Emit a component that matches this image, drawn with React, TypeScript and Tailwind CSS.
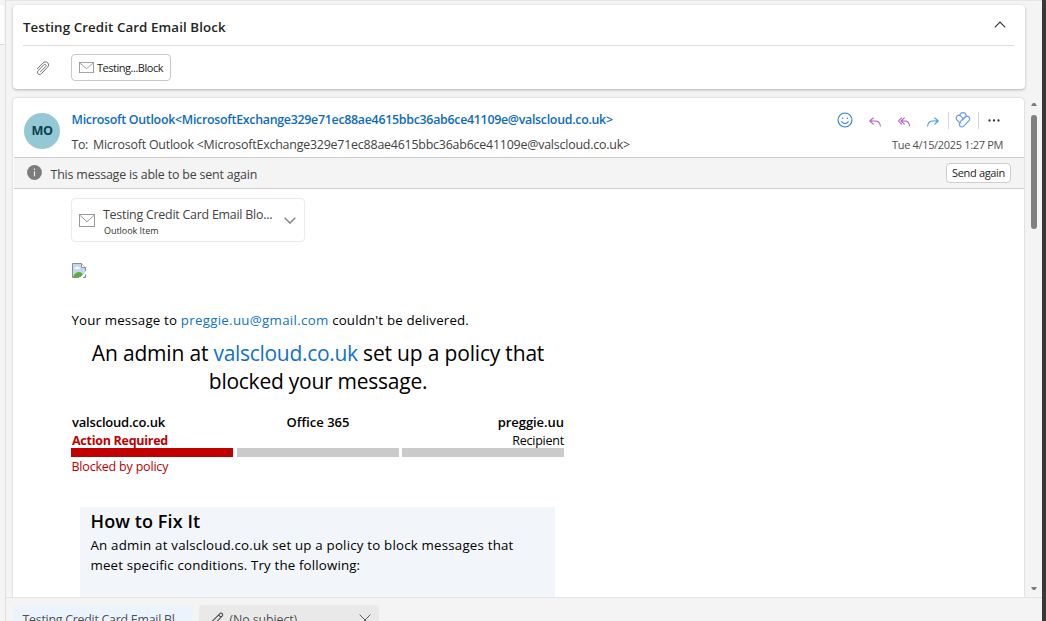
import type { ReactNode } from 'react';

function Envelope({ className }: { className: string }) {
  return (
    <svg className={className} viewBox="0 0 16 13" fill="none" stroke="#999" strokeWidth="1" preserveAspectRatio="none">
      <rect x="0.5" y="0.5" width="15" height="12" />
      <path d="M0.8 1.2 8 7.8 15.2 1.2" />
    </svg>
  );
}

function Paperclip() {
  return (
    <svg className="h-[15px] w-[14px]" viewBox="0 0 14 15" fill="none" stroke="#6e6e6e" strokeWidth="1" strokeLinecap="round">
      <path d="M1.300 7.800 6.700 2.200C8.300.6 10.500.6 11.700 1.800c1.200 1.200 1.100 3.100-.3 4.500L5.600 12.600c-1.100 1.100-2.600 1.100-3.500.2-.9-.9-.8-2.300.2-3.300L7.700 3.900c.6-.6 1.500-.7 2-.1.500.5.400 1.300-.2 1.900L4.600 10.700" />
    </svg>
  );
}

function BrokenImage() {
  return (
    <svg className="h-[15px] w-[14px]" viewBox="0 0 14 15">
      <path d="M.5.500h9l4 4v10H.5z" fill="#c5d5f5" />
      <path d="M2.500 5.500c0-1 1-1.300 1.600-1.100.4-1.200 2.300-1.200 2.700 0 .9 0 1.400 1.100.4 1.600H3c-.3 0-.5-.2-.5-.5z" fill="#fff" />
      <path d="M1 14c1-3 3.500-5 6-5 2.500 0 4 2 6 5z" fill="#5aaf3c" />
      <path d="M14 8.500 7.500 15H11l3-3z" fill="#fff" />
      <path d="M7 14.500H.5V.5h9l4 4V8M13.500 11.500v3H11" fill="none" stroke="#8f8f8f" />
      <path d="M9.500.5v4h4" fill="#fff" stroke="#8f8f8f" />
    </svg>
  );
}

function Pencil() {
  return (
    <svg className="h-[14px] w-[14px]" viewBox="0 0 14 14" fill="none" stroke="#505050" strokeWidth="1.1" strokeLinejoin="round">
      <path d="M1.200 12.800 2 9.500 9.700 1.800c.8-.8 1.800-.8 2.500-.1s.7 1.700-.1 2.500L4.500 12zM8.600 3l2.400 2.400" />
    </svg>
  );
}

function Actions() {
  return (
    <div className="flex h-4 items-center">
      <svg className="h-4 w-4" viewBox="0 0 16 16" fill="none" stroke="#2f80c8" strokeWidth="1.1" strokeLinecap="round">
        <circle cx="8" cy="8" r="7" />
        <path d="M4.700 9.800c1.500 2.300 5.100 2.300 6.600 0" />
        <circle cx="5.600" cy="6.200" r=".8" fill="#2f80c8" stroke="none" />
        <circle cx="10.400" cy="6.200" r=".8" fill="#2f80c8" stroke="none" />
      </svg>
      <svg className="mt-[3px] ml-4 h-[10px] w-3" viewBox="0 0 12 10" fill="none" stroke="#b45cc0" strokeWidth="1.05" strokeLinecap="round" strokeLinejoin="round">
        <path d="M4.300.8.8 4l3.500 3.200M.8 4H6c3.300 0 5 2 5.400 5" />
      </svg>
      <svg className="mt-[3px] ml-[17px] h-[10px] w-3" viewBox="0 0 12 10" fill="none" stroke="#b45cc0" strokeWidth="1.05" strokeLinecap="round" strokeLinejoin="round">
        <path d="M3.500.8.500 4l3 3.200M6.300.8 3 4l3.300 3.200M3 4h4c2.800 0 4.200 2 4.500 5" />
      </svg>
      <svg className="mt-[3px] ml-[17px] h-[10px] w-3" viewBox="0 0 12 10" fill="none" stroke="#3f9be0" strokeWidth="1.05" strokeLinecap="round" strokeLinejoin="round">
        <path d="M7.700.8 11.200 4 7.700 7.200M11.200 4H6C2.700 4 1 6 .6 9" />
      </svg>
      <span className="ml-[9px] h-[17px] w-px bg-[#d4d4d4]" />
      <svg className="ml-[6px] h-4 w-4" viewBox="0 0 16 16" fill="none" stroke="#6f9bf5" strokeWidth="1.200" strokeLinejoin="round">
        <path d="M5.300 9.700 10 5c1.100-1.100 2.800-1.100 3.900 0s1.100 2.800 0 3.900l-5.200 5.200c-1 1-2.600 1-3.600 0s-.9-2.400.2-3.500z" />
        <path d="M4.800 10.600 2.100 8.200C.9 7.100.9 5.300 2 4.200s2.700-1.100 3.800 0l2.400 2.600" />
        <path d="M4.900 3.600C4.900 1.900 6.200.7 8 .7s3.100 1.200 3.100 2.900c0 .4-.1.700-.2 1L7 8.300" />
      </svg>
      <span className="ml-[7px] h-[17px] w-px bg-[#d4d4d4]" />
      <svg className="mt-px mr-px ml-[9px] h-1 w-3" viewBox="0 0 12 4" fill="#333">
        <circle cx="1.500" cy="1.500" r="1.150" />
        <circle cx="6" cy="1.500" r="1.150" />
        <circle cx="10.500" cy="1.500" r="1.150" />
      </svg>
    </div>
  );
}

function Link({ children }: { children: ReactNode }) {
  return <span className="tracking-[0.3px] text-[#0f72c7]">{children}</span>;
}

function SubjectCard() {
  return (
    <section className="h-[84px] w-[1012px] rounded-[4px] bg-white pr-[11px] pl-[9px] shadow-[0_1px_3px_rgba(0,0,0,0.28)]">
      <div className="ml-px flex h-[41px] items-center justify-between border-b border-[#dcdcdc]">
        <h1 className="mt-[3px] text-[13.3px] leading-5 font-semibold tracking-[0.1px] text-[#242424]">Testing Credit Card Email Block</h1>
        <svg className="mr-2 mb-[2px] h-[7px] w-3" viewBox="0 0 12 7" fill="none" stroke="#333" strokeWidth="1.100">
          <path d="M.8 6.300 6 1l5.200 5.300" />
        </svg>
      </div>
      <div className="flex h-[43px] items-center">
        <div className="mt-px ml-[14px]"><Paperclip /></div>
        <div className="ml-[21px] flex h-[27px] w-[100px] items-center rounded-[4px] border border-[#c8c8c8] pl-[7px]">
          <Envelope className="h-[11px] w-[15px]" />
          <span className="ml-[3px] text-[11px] leading-4 tracking-[-0.47px] text-[#242424]">Testing...Block</span>
        </div>
      </div>
    </section>
  );
}

function MessageHeader() {
  return (
    <header className="flex h-[59px] pl-[11px]">
      <div className="mt-[15px] flex h-9 w-9 items-center justify-center rounded-full bg-[#94c8d4] pt-px text-[12.600px] font-bold tracking-[-0.5px] text-[#0a4250]">MO</div>
      <div className="ml-[11.5px] flex flex-col pt-[12px]">
        <div className="h-5 text-[12.4px] leading-5 font-semibold tracking-[-0.285px] text-[#0f6cbd]">
          Microsoft Outlook&lt;MicrosoftExchange329e71ec88ae4615bbc36ab6ce41109e@valscloud.co.uk&gt;
        </div>
        <div className="mt-[5px] flex h-5 text-[12.4px] leading-5 text-[#424242]">
          <span className="w-[21.5px] tracking-[-0.4px]">To:</span>
          <span className="tracking-[-0.2px]">Microsoft Outlook &lt;MicrosoftExchange329e71ec88ae4615bbc36ab6ce41109e@valscloud.co.uk&gt;</span>
        </div>
      </div>
      <div className="ml-auto flex flex-col items-end pt-[14px] pr-[21px]">
        <div className="mr-[2px]"><Actions /></div>
        <div className="mt-[9px] text-[11px] leading-4 tracking-[-0.33px] text-[#505050]">Tue 4/15/2025 1:27 PM</div>
      </div>
    </header>
  );
}

function ResendBar() {
  return (
    <div className="ml-px flex h-8 items-center border-y border-[#cdcdcd] bg-[#f4f4f4] pr-[13px] pl-[13px]">
      <svg className="mb-px h-[15px] w-[15px]" viewBox="0 0 15 15">
        <circle cx="7.500" cy="7.500" r="7.400" fill="#7c7c7c" />
        <path d="M7.500 6.200v5M7.500 3.600v1.300" stroke="#e8e8e8" strokeWidth="1.200" />
      </svg>
      <span className="mt-[3px] ml-[8.5px] text-[12.4px] leading-5 tracking-[-0.17px] text-[#424242]">This message is able to be sent again</span>
      <button className="ml-auto flex h-5 w-[65px] items-center justify-center rounded-[4px] border border-[#cdcdcd] bg-white text-[11px] tracking-[-0.33px] whitespace-nowrap text-[#242424]">Send again</button>
    </div>
  );
}

function Attachment() {
  return (
    <div className="mt-[9px] flex h-11 w-[234px] items-center rounded-[4px] border border-[#ebebeb] pl-[7px]">
      <Envelope className="h-[13px] w-[16px]" />
      <div className="ml-2 w-[172px] pt-[2px] whitespace-nowrap">
        <div className="h-[18px] text-[12.4px] leading-[18px] tracking-[-0.23px] text-[#424242]">Testing Credit Card Email Blo...</div>
        <div className="ml-px h-[13px] text-[9px] leading-[13px] tracking-[-0.04px] text-[#303030]">Outlook Item</div>
      </div>
      <svg className="ml-[9px] h-[7px] w-3" viewBox="0 0 12 7" fill="none" stroke="#858585" strokeWidth="1.500">
        <path d="M.7.8 6 6 11.300.8" />
      </svg>
    </div>
  );
}

function DeliveryReport() {
  return (
    <div className="w-[493px] text-black">
      <p className="mt-[32px] ml-[0.5px] h-5 text-[13.3px] leading-5 tracking-[0.16px] whitespace-nowrap">
        Your message to <Link>preggie.uu@gmail.com</Link> couldn't be delivered.
      </p>
      <p className="mt-[9px] pl-px text-center text-[21px] leading-7 tracking-[-0.18px]">
        An admin at <span className="tracking-[-0.3px] text-[#0f72c7]">valscloud.co.uk</span> set up a policy that<br />
        <span className="tracking-[-0.25px]">blocked your message.</span>
      </p>
      <div className="mt-[18px] grid h-[18px] grid-cols-3 text-[13px] leading-[18px] font-semibold">
        <span className="pl-px tracking-[-0.2px]">valscloud.co.uk</span>
        <span className="pl-px text-center">Office 365</span>
        <span className="text-right tracking-[-0.05px]">preggie.uu</span>
      </div>
      <div className="flex h-[17px] items-start justify-between text-[12.5px] leading-[19px]">
        <span className="pl-px font-bold tracking-[-0.27px] text-[#c00000]">Action Required</span>
        <span className="tracking-[-0.22px]">Recipient</span>
      </div>
      <div className="flex h-[9px]">
        <span className="w-[162px] bg-[#c00000]" />
        <span className="ml-1 w-[162px] bg-[#cacaca]" />
        <span className="ml-[3px] w-[162px] bg-[#cacaca]" />
      </div>
      <div className="mt-px ml-[0.5px] h-[18px] text-[12.5px] leading-[18px] tracking-[-0.2px] text-[#c00000]">Blocked by policy</div>
    </div>
  );
}

function FixPanel() {
  return (
    <div className="mt-[31px] ml-[9px] h-[90px] w-[475px] bg-[#f2f5fa] pt-[2px] pl-[10.5px] whitespace-nowrap text-black">
      <h2 className="h-6 text-[18px] leading-6 font-semibold tracking-[0.1px]">How to Fix It</h2>
      <p className="mt-[2px] text-[13.3px] leading-5 tracking-[0.2px]">
        An admin at valscloud.co.uk set up a policy to block messages that<br />
        <span className="tracking-[0.16px]">meet specific conditions. Try the following:</span>
      </p>
    </div>
  );
}

function DraftTabs() {
  return (
    <nav className="flex h-6 gap-[6px] border-t border-[#e4e4e4] pt-[7px] pl-[7px] text-[12.400px] leading-5 whitespace-nowrap text-[#505050]">
      <div className="h-8 w-[180px] rounded-t-[4px] bg-[#ebf3fc] pt-[5px] pl-[9.5px] tracking-[-0.26px]">Testing Credit Card Email Bl...</div>
      <div className="flex h-8 w-[180px] rounded-t-[4px] bg-[#e9e9e9] pt-[5px] pl-[11px]">
        <div className="mt-[2px]"><Pencil /></div>
        <span className="ml-[5.5px] tracking-[-0.1px]">(No subject)</span>
        <svg className="mt-[4px] mr-[8px] ml-auto h-3 w-3" viewBox="0 0 12 12" fill="none" stroke="#5c5c5c" strokeWidth="1">
          <path d="M.6.600 11.400 11.400M11.400.600.6 11.400" />
        </svg>
      </div>
    </nav>
  );
}

export default function App() {
  return (
    <div className="flex h-[621px] w-[1046px] overflow-hidden bg-[#f4f4f4] font-['Open_Sans','Liberation_Sans',sans-serif]">
      <aside className="w-[6px] shrink-0 border-r border-[#e0e0e0] pt-[5px]">
        <div className="h-[40px] w-[4px] rounded-tr-[3px] border-b border-[#d8d8d8] bg-white" />
      </aside>
      <main className="flex w-[1036px] shrink-0 flex-col">
        <div className="h-px shrink-0 bg-[#e6e6e6]" />
        <div className="flex h-[596px] shrink-0 flex-col overflow-hidden pt-1 pl-[7px]">
          <SubjectCard />
          <div className="mt-[9px] flex">
            <article className="h-[499px] w-[1011px] shrink-0 rounded-t-[4px] bg-white shadow-[0_0_2px_rgba(0,0,0,0.25)]">
              <MessageHeader />
              <ResendBar />
              <div className="pl-[58px]">
                <Attachment />
                <div className="mt-[21px] ml-px"><BrokenImage /></div>
                <DeliveryReport />
                <FixPanel />
              </div>
            </article>
            <div className="flex h-[499px] w-[18px] flex-col items-center pt-[5px] pl-[2px]">
              <svg className="h-[3px] w-[6px]" viewBox="0 0 6 3" fill="#7c7c7c"><path d="M0 3 2 0h2l2 3z" /></svg>
              <div className="mt-[9px] h-[114px] w-[6px] rounded-full bg-[#808080]" />
              <svg className="mt-auto mb-[7px] h-[3px] w-[6px]" viewBox="0 0 6 3" fill="#7c7c7c"><path d="M0 0h6L4 3H2z" /></svg>
            </div>
          </div>
        </div>
        <DraftTabs />
      </main>
      <div className="w-1 shrink-0 bg-[#383838]" />
    </div>
  );
}
